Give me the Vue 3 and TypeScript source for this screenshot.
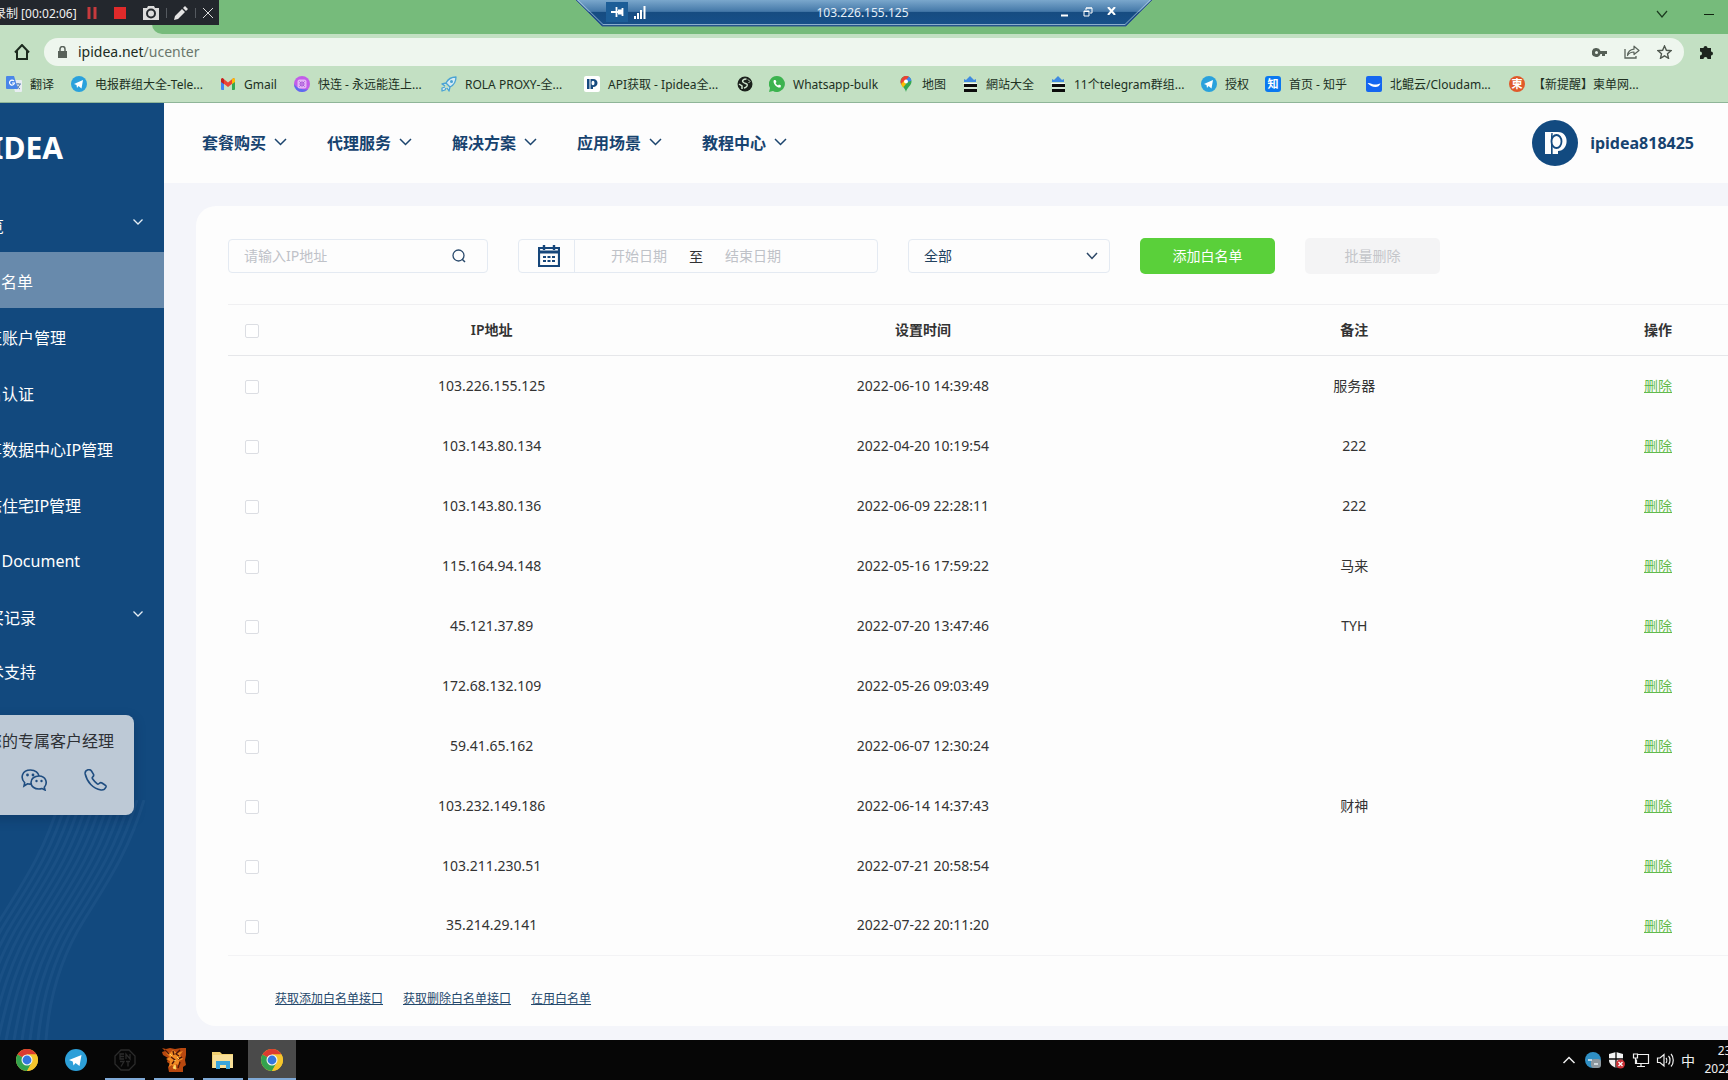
<script setup lang="ts">
import { computed, ref } from 'vue'

interface Bookmark {
  icon: string
  label: string
  width: number
}

interface WhitelistRow {
  ip: string
  time: string
  note: string
}

const bookmarks: Bookmark[] = [
  { icon: 'translate', label: '翻译', width: 25 },
  { icon: 'telegram', label: '电报群组大全-Tele...', width: 109 },
  { icon: 'gmail', label: 'Gmail', width: 34 },
  { icon: 'kuailian', label: '快连 - 永远能连上...', width: 107 },
  { icon: 'rocket', label: 'ROLA PROXY-全...', width: 103 },
  { icon: 'ipidea', label: 'API获取 - Ipidea全...', width: 113 },
  { icon: 'globe', label: '', width: 0 },
  { icon: 'whatsapp', label: 'Whatsapp-bulk', width: 89 },
  { icon: 'maps', label: '地图', width: 24 },
  { icon: 'stack', label: '網站大全', width: 48 },
  { icon: 'stack', label: '11个telegram群组...', width: 111 },
  { icon: 'telegram', label: '授权', width: 24 },
  { icon: 'zhihu', label: '首页 - 知乎', width: 61 },
  { icon: 'cloudam', label: '北鲲云/Cloudam...', width: 103 },
  { icon: 'jian', label: '【新提醒】柬单网...', width: 102 },
]

const navItems = ['套餐购买', '代理服务', '解决方案', '应用场景', '教程中心']

const sideItems = [
  { label: '总览', arrow: true, top: true, active: false },
  { label: 'IP白名单', arrow: false, top: false, active: true },
  { label: '认证账户管理', arrow: false, top: false, active: false },
  { label: '实名认证', arrow: false, top: false, active: false },
  { label: '独享数据中心IP管理', arrow: false, top: false, active: false },
  { label: '静态住宅IP管理', arrow: false, top: false, active: false },
  { label: 'API Document', arrow: false, top: true, active: false },
  { label: '购买记录', arrow: true, top: true, active: false },
  { label: '技术支持', arrow: false, top: true, active: false },
]

const rows: WhitelistRow[] = [
  { ip: '103.226.155.125', time: '2022-06-10 14:39:48', note: '服务器' },
  { ip: '103.143.80.134', time: '2022-04-20 10:19:54', note: '222' },
  { ip: '103.143.80.136', time: '2022-06-09 22:28:11', note: '222' },
  { ip: '115.164.94.148', time: '2022-05-16 17:59:22', note: '马来' },
  { ip: '45.121.37.89', time: '2022-07-20 13:47:46', note: 'TYH' },
  { ip: '172.68.132.109', time: '2022-05-26 09:03:49', note: '' },
  { ip: '59.41.65.162', time: '2022-06-07 12:30:24', note: '' },
  { ip: '103.232.149.186', time: '2022-06-14 14:37:43', note: '财神' },
  { ip: '103.211.230.51', time: '2022-07-21 20:58:54', note: '' },
  { ip: '35.214.29.141', time: '2022-07-22 20:11:20', note: '' },
]

const selected = ref<string[]>([])
const allSelected = computed({
  get: () => selected.value.length === rows.length,
  set: (on: boolean) => {
    selected.value = on ? rows.map((r) => r.ip) : []
  },
})

// Contour lines in the sidebar's lower background
const waves = Array.from(
  { length: 13 },
  (_, i) =>
    `M${-50 + 8 * i} 240 C${-35 + 7 * i} 200 ${-25 + 7 * i} 160 ${7 * i} 120 S${45 + 7 * i} 50 ${60 + 7 * i} 0`,
)

const tasks = ['chrome', 'telegram', 'emblem', 'flame', 'folder', 'chrome']
</script>

<template>
  <div class="desktop">
    <header class="browser">
      <div class="tabstrip">
        <div class="tab-end"></div>
        <div class="win-controls">
          <button type="button" aria-label="搜索标签页">
            <svg width="12" height="8" viewBox="0 0 12 8"><path d="M1 1l5 6 5-6" fill="none" stroke="#1c3a20" stroke-width="1.2" /></svg>
          </button>
          <button type="button" aria-label="最小化">
            <svg width="10" height="8" viewBox="0 0 10 8"><path d="M0 4.500h10" stroke="#10240f" /></svg>
          </button>
        </div>
      </div>

      <div class="recorder">
        <span class="rec-text">录制 [00:02:06]</span>
        <svg class="rec-main" width="10" height="12" viewBox="0 0 10 12"><path d="M2 0v12M8 0v12" stroke="#c63a3d" stroke-width="3" /></svg>
        <svg class="rec-main" width="12" height="12" viewBox="0 0 12 12"><path d="M0 0h12v12H0z" fill="#e02a2a" /></svg>
        <svg width="16" height="14" viewBox="0 0 16 14">
          <path d="M5 0h6l1 2h4v12H0V2h4z" fill="#dcdcdc" />
          <circle cx="8" cy="7.500" r="4" fill="none" stroke="#25292e" stroke-width="2" />
        </svg>
        <i class="rec-sep"></i>
        <svg width="14" height="14" viewBox="0 0 14 14"><path d="M0 14l1-4 7-7 3 3-7 7zM9 2l2-2 3 3-2 2z" fill="#e4e4e4" /></svg>
        <i class="rec-sep"></i>
        <svg width="10" height="10" viewBox="0 0 10 10"><path d="M0 0l10 10M10 0L0 10" stroke="#dcdcdc" /></svg>
      </div>

      <div class="rdp">
        <svg class="rdp-shape" viewBox="0 0 576 27" preserveAspectRatio="none">
          <defs>
            <linearGradient id="rdpfill" x1="0" y1="0" x2="0" y2="1">
              <stop offset="0" stop-color="#7aa7cc" />
              <stop offset=".44" stop-color="#4478a8" />
              <stop offset=".46" stop-color="#164c81" />
              <stop offset="1" stop-color="#17508a" />
            </linearGradient>
          </defs>
          <path d="M0 0L26 26H550L576 0z" fill="url(#rdpfill)" />
          <path d="M0 0L26 26H550L576 0" fill="none" stroke="#37598c" />
          <path d="M2 0L27 24.500H549L574 0" fill="none" stroke="#a9c6dd" stroke-width=".8" />
        </svg>
        <div class="rdp-row">
          <span class="rdp-pin">
            <svg width="13" height="10" viewBox="0 0 13 10"><path d="M0 5h5M5.500 0v10M6 5h5M7 3.500h4M7 6.500h4M11.500 1v8" stroke="#fff" stroke-width="1.800" fill="none" /></svg>
          </span>
          <svg width="12" height="13" viewBox="0 0 12 13"><path d="M1 10v3M4 7v6M7 4v9M10.500 0v13" stroke="#fff" stroke-width="2" /></svg>
          <span class="rdp-title">103.226.155.125</span>
          <span class="rdp-btns">
            <svg width="8" height="10" viewBox="0 0 8 10"><path d="M0 8.500h7" stroke="#fff" stroke-width="2" /></svg>
            <svg width="10" height="10" viewBox="0 0 10 10"><path d="M3 3V1h6v5H7M1 4h5v5H1zM3 1h6M1 4.500h5" fill="none" stroke="#fff" /></svg>
            <svg width="9" height="8" viewBox="0 0 9 8"><path d="M1 0l7 8M8 0L1 8" stroke="#fff" stroke-width="2" /></svg>
          </span>
        </div>
      </div>

      <div class="toolbar">
        <button type="button" class="home" aria-label="主页">
          <svg width="16" height="16" viewBox="0 0 16 16"><path d="M1 8.500L8 1l7 7.500M3 7v8h10V7" fill="none" stroke="#1c2a1e" stroke-width="2" /></svg>
        </button>
        <label class="omnibox">
          <svg width="9" height="12" viewBox="0 0 9 12"><path d="M0 5h9v7H0z" fill="#59625a" /><path d="M2 5V3a2.500 2.500 0 015 0v2" fill="none" stroke="#59625a" stroke-width="1.500" /></svg>
          <span class="url">ipidea.net<span class="path">/ucenter</span></span>
          <svg class="end" width="15" height="9" viewBox="0 0 15 9"><path d="M4.500 0a4.500 4.500 0 104 6H10v2h3V6h2V3H8.500a4.500 4.500 0 00-4-3zm0 3a1.500 1.500 0 110 3 1.500 1.500 0 010-3z" fill="#555f56" /></svg>
          <svg width="16" height="14" viewBox="0 0 16 14"><path d="M1 4v9h11v-2" fill="none" stroke="#5a635b" stroke-width="1.300" /><path d="M3.500 10.500C4 6 6.500 4.500 10 4.200V1.200L15 5.500l-5 4V7C7 7 5 8 3.500 10.500z" fill="none" stroke="#5a635b" stroke-width="1.200" stroke-linejoin="round" /></svg>
          <svg width="15" height="14" viewBox="0 0 15 14"><path d="M7.500 1l1.900 4.300 4.600.4-3.500 3.100 1 4.500-4-2.400-4 2.400 1-4.500L1 5.700l4.600-.4z" fill="none" stroke="#4f584f" stroke-width="1.400" /></svg>
        </label>
        <svg class="puzzle" width="16" height="16" viewBox="0 0 16 16"><path d="M2 4h3.500a2 2 0 114 0H13v3.500a2 2 0 110 4V15H9.500a2 2 0 10-4 0H2v-3.500a2 2 0 100-4z" fill="#1d241e" /></svg>
      </div>

      <nav class="bookmarks">
        <a v-for="(b, i) in bookmarks" :key="i" href="#" :aria-label="b.label || '网页'">
          <svg width="16" height="16" viewBox="0 0 16 16">
            <g v-if="b.icon === 'translate'">
              <path d="M6 4h9a1 1 0 011 1v10a1 1 0 01-1 1H9z" fill="#e8edf2" />
              <path d="M9 8h6M12 7v1M14 8c-1 3-3 4-4 5M10.500 9c1 2 2 3 3.500 4" stroke="#5a7fae" fill="none" />
              <path d="M1 0h7l4 13H1a1 1 0 01-1-1V1a1 1 0 011-1z" fill="#4a86e8" />
              <path d="M8 5A2.500 2.500 0 108.500 7H6" fill="none" stroke="#fff" stroke-width="1.200" />
            </g>
            <g v-else-if="b.icon === 'telegram'">
              <circle cx="8" cy="8" r="8" fill="#2aa1dc" />
              <path d="M3 8l9-4-1.500 8.500L7.500 10l-1.500 2-.5-3z" fill="#fff" />
            </g>
            <g v-else-if="b.icon === 'gmail'">
              <path d="M1 3h3v11H2a1 1 0 01-1-1z" fill="#4285f4" />
              <path d="M12 3h3v10a1 1 0 01-1 1h-2z" fill="#34a853" />
              <path d="M1 3l1.500-1L8 6.500 13.500 2 15 3v2.500L8 11 1 5.500z" fill="#ea4335" />
              <path d="M12 3.300L13.500 2 15 3v3l-3 2z" fill="#fbbc04" />
              <path d="M1 3l1.500-1L4 3.300V8L1 6z" fill="#c5221f" />
            </g>
            <g v-else-if="b.icon === 'kuailian'">
              <circle cx="8" cy="8" r="8" fill="#c25de8" />
              <path d="M0 8a8 8 0 008 8 8 8 0 006-2.500C8 14 3 12 0 8z" fill="#5a6df0" />
              <rect x="3.500" y="3.500" width="9" height="9" rx="2" fill="#e3b4f5" />
              <circle cx="8" cy="8" r="2" fill="none" stroke="#a44fd6" />
              <path d="M5 5l6 6M11 5l-6 6" stroke="#a44fd6" stroke-width=".6" />
            </g>
            <g v-else-if="b.icon === 'rocket'">
              <path d="M15 1c-5 0-8 2-10 6l4 4c4-2 6-5 6-10zM5 7L1 8l3 2M9 11l-1 4-2-3M4 11l-3 1v3l3-1 1-2" fill="#d5eaf3" stroke="#4aa3d4" stroke-width="1.300" stroke-linejoin="round" />
              <circle cx="10.500" cy="5.500" r="1.500" fill="#4aa3d4" />
            </g>
            <g v-else-if="b.icon === 'ipidea'">
              <rect width="16" height="16" rx="2" fill="#fff" />
              <path d="M3 3h2.500v10H3zM6.500 3H9c6 0 6 8 0 8v2H6.500z" fill="#164a80" />
              <ellipse cx="9" cy="7" rx="1.500" ry="2.200" fill="#fff" />
            </g>
            <g v-else-if="b.icon === 'globe'">
              <circle cx="8" cy="8" r="7.500" fill="#1b211c" />
              <path d="M9.500 3C6 3 4.500 5 6.500 6.500s4.500.5 3.500 3.500c-.7 1.700-2 1.500-3 2M2 8l3 2v3" fill="none" stroke="#cfe3ce" stroke-width="1.500" />
              <path d="M11 3.500l2 2-1.500 1.500" fill="none" stroke="#cfe3ce" />
            </g>
            <g v-else-if="b.icon === 'whatsapp'">
              <path d="M8 0a8 8 0 11-4 15l-4 1 1-4A8 8 0 018 0z" fill="#3cb34f" />
              <path d="M5 4c-2 3 3 8.500 6.500 7.500l.5-2-2-1-1 1c-1-.3-2-1.500-2.500-2.500l1-1L6.500 4z" fill="#fff" />
            </g>
            <g v-else-if="b.icon === 'maps'">
              <path d="M8 0a5.500 5.500 0 015.500 5.500C13.500 10 9 11 8 16 7 11 2.500 10 2.500 5.500A5.500 5.500 0 018 0z" fill="#34a853" />
              <path d="M4 2a5.500 5.500 0 017-1.200L7 6 3 8a6 6 0 011-6z" fill="#ea4335" />
              <path d="M11 .8a5.500 5.500 0 012.400 4L9.500 6 8 4z" fill="#4285f4" />
              <path d="M3 8l3-3 2 3-3 3.500z" fill="#fbbc04" />
              <circle cx="8" cy="5.500" r="2" fill="#fff" />
            </g>
            <g v-else-if="b.icon === 'stack'">
              <path d="M2 6V3l2 1 2-2 2-2 2 2 2 2 2-1v3z" fill="#3f8ae0" />
              <path d="M1 7.500h14" stroke="#f4f8f4" stroke-width="1" />
              <path d="M2 9.500h13M2 14.500h13" stroke="#0c0c0c" stroke-width="3" />
              <path d="M2 12h13" stroke="#e8f0e8" />
            </g>
            <g v-else-if="b.icon === 'zhihu'">
              <rect width="16" height="16" rx="3" fill="#0a78f0" />
              <text x="8" y="12" text-anchor="middle" class="glyph">知</text>
            </g>
            <g v-else-if="b.icon === 'cloudam'">
              <rect width="16" height="16" rx="2" fill="#1466f0" />
              <path d="M1.500 7c3-.3 4.500 1.300 6.500 1.500 2.500.2 4.500-.5 6.500-1-1 2.500-2.500 3.500-5 3.500-3.500 0-5.500-1.500-8-4z" fill="#fff" />
            </g>
            <g v-else>
              <circle cx="8" cy="8" r="8" fill="#e0592a" />
              <text x="8" y="12" text-anchor="middle" class="glyph">柬</text>
            </g>
          </svg>
          <span v-if="b.label" :style="{ width: b.width + 'px' }">{{ b.label }}</span>
        </a>
      </nav>
    </header>

    <div class="site">
      <aside class="sidebar">
        <svg class="waves" width="164" height="240" viewBox="0 0 164 240">
          <path v-for="(d, i) in waves" :key="i" :d="d" />
        </svg>
        <div class="logo">IPIDEA</div>
        <a v-for="item in sideItems" :key="item.label" href="#" class="side-item" :class="{ active: item.active, top: item.top }">
          <span>{{ item.label }}</span>
          <svg v-if="item.arrow" width="10" height="6" viewBox="0 0 10 6"><path d="M.5.5L5 5 9.500.5" fill="none" stroke="#e6eef5" stroke-width="1.300" /></svg>
        </a>
        <div class="manager">
          <p>联系您的专属客户经理</p>
          <div class="manager-icons">
            <svg width="26" height="22" viewBox="0 0 26 22"><circle cx="13" cy="11" r="9" /></svg>
            <svg width="26" height="22" viewBox="0 0 26 22">
              <path d="M10.500 15c-1.500.3-2.500.2-4-.2L3 17l.7-3.300C-1 9 1 1 9.500 1c5 0 8 3 8.500 6" />
              <path d="M18 7c-4.500 0-8 2.500-8 6.500S13.500 20 18 20c1 0 2-.2 3-.5l3 1.500-.7-2.700C27 14 25 7 18 7z" />
              <g class="dots"><circle cx="6.500" cy="6" r="1.400" /><circle cx="12" cy="6" r="1.400" /><circle cx="15.500" cy="12" r="1.200" /><circle cx="20.500" cy="12" r="1.200" /></g>
            </svg>
            <svg width="26" height="22" viewBox="0 0 26 22"><path d="M5 .8C3 1.500 1.800 3 2.200 5 4 13 10 19.500 18 21c2 .3 4-.8 5-3 .4-1-.2-1.500-1-2l-3-2c-1-.6-1.800-.4-2.500.3-1 1-1.500 1.200-2.500.4C12 13 11 12 9.500 9.800c-.6-1-.4-1.400.3-2C10.700 7 11 6.300 10.500 5.300L8.500 2C7.500.7 6.500.3 5 .8z" /></svg>
          </div>
        </div>
      </aside>

      <main class="main">
        <div class="topbar">
          <nav class="topnav">
            <a v-for="n in navItems" :key="n" href="#">
              {{ n }}
              <svg width="13" height="8" viewBox="0 0 13 8"><path d="M1 1l5.500 5.500L12 1" fill="none" stroke="#1c456e" stroke-width="1.500" /></svg>
            </a>
          </nav>
          <div class="user">
            <svg width="46" height="46" viewBox="0 0 46 46">
              <circle cx="23" cy="23" r="23" fill="#124a80" />
              <path d="M13 12h6v22h-6z" fill="#fdfdfd" />
              <path d="M18.500 12H26c12 0 11 19 0 19v3h-6V16" fill="#fdfdfd" />
              <path d="M20 34V13" stroke="#124a80" stroke-width="1.300" />
              <ellipse cx="24.500" cy="21.500" rx="5" ry="6.500" fill="#fdfdfd" stroke="#124a80" stroke-width="1.800" />
            </svg>
            <span>ipidea818425</span>
          </div>
        </div>

        <section class="panel">
          <form class="filters" @submit.prevent>
            <label class="search">
              <input type="text" placeholder="请输入IP地址" aria-label="IP地址" />
              <svg width="14" height="14" viewBox="0 0 14 14"><circle cx="6.500" cy="6.500" r="5.500" fill="none" stroke="#2a4a6c" stroke-width="1.300" /><path d="M10 10l3 3" stroke="#2a4a6c" stroke-width="1.500" /></svg>
            </label>
            <div class="range">
              <span class="cal">
                <svg width="22" height="22" viewBox="0 0 22 22">
                  <path d="M1 3h20v18H1z" fill="none" stroke="#16467a" stroke-width="2.200" />
                  <path d="M1 7h20" stroke="#16467a" stroke-width="3" />
                  <path d="M6 0v5M16 0v5" stroke="#16467a" stroke-width="2.400" />
                  <path d="M5 12h3M9.500 12h3M14 12h3M5 16h3M9.500 16h3M14 16h3" stroke="#16467a" stroke-width="2" />
                </svg>
              </span>
              <input type="text" placeholder="开始日期" aria-label="开始日期" />
              <span class="to">至</span>
              <input type="text" placeholder="结束日期" aria-label="结束日期" />
            </div>
            <div class="select">
              <select aria-label="类型"><option>全部</option></select>
              <svg width="12" height="8" viewBox="0 0 12 8"><path d="M1 1l5 5.500L11 1" fill="none" stroke="#2c4766" stroke-width="1.500" /></svg>
            </div>
            <button type="submit" class="btn primary">添加白名单</button>
            <button type="button" class="btn" disabled>批量删除</button>
          </form>

          <table>
            <colgroup>
              <col class="c-check" /><col /><col /><col /><col class="c-op" />
            </colgroup>
            <thead>
              <tr>
                <th><input v-model="allSelected" type="checkbox" aria-label="全选" /></th>
                <th>IP地址</th>
                <th>设置时间</th>
                <th>备注</th>
                <th>操作</th>
              </tr>
            </thead>
            <tbody>
              <tr v-for="r in rows" :key="r.ip">
                <td><input v-model="selected" type="checkbox" :value="r.ip" :aria-label="r.ip" /></td>
                <td>{{ r.ip }}</td>
                <td>{{ r.time }}</td>
                <td>{{ r.note }}</td>
                <td><a href="#">删除</a></td>
              </tr>
            </tbody>
          </table>

          <div class="links">
            <a href="#">获取添加白名单接口</a>
            <a href="#">获取删除白名单接口</a>
            <a href="#">在用白名单</a>
          </div>
        </section>
      </main>
    </div>

    <footer class="taskbar">
      <div class="tasks">
        <button v-for="(t, i) in tasks" :key="i" type="button" :aria-label="t" :class="{ open: i > 1, current: i === 5 }">
          <svg v-if="t === 'chrome'" width="22" height="22" viewBox="0 0 22 22">
            <circle cx="11" cy="11" r="11" fill="#f5c52c" />
            <path d="M11 11L1.500 5.500A11 11 0 0120.500 5.500H11z" fill="#dc3b30" />
            <path d="M1.500 5.500A11 11 0 0011 22l4.700-8.500L11 11z" fill="#33a24e" />
            <path d="M11 5.500h9.500A11 11 0 0111 22l5-8.500z" fill="#f5c52c" />
            <circle cx="11" cy="11" r="5.500" fill="#f4f4f4" />
            <circle cx="11" cy="11" r="4.400" fill="#3577dd" />
          </svg>
          <svg v-else-if="t === 'telegram'" width="22" height="22" viewBox="0 0 22 22">
            <circle cx="11" cy="11" r="11" fill="#2c9fd8" />
            <path d="M4 11l12.500-5-2 11-4-3-2 2.500-.8-4z" fill="#fff" />
          </svg>
          <svg v-else-if="t === 'emblem'" width="22" height="22" viewBox="0 0 22 22">
            <g fill="none" stroke="#2b2b2b" stroke-width="1.300">
              <path d="M7 1h8l6 6v8l-6 6H7l-6-6V7z" />
              <path d="M10 5H6v5h4M6 7.500h4M12 10V5l4 5V5M6 12.500h4l-3 5M12 12.500h4M14 12.500v5" />
            </g>
          </svg>
          <svg v-else-if="t === 'flame'" width="24" height="24" viewBox="0 0 24 24">
            <path d="M0 0l4 1 4-1 5 1 6-1h5v7l-1 5 1 5-3 2v5H7l-1-5 2-3-3-2 1-4-5-3-1-3 3-1z" fill="#b8480f" />
            <path d="M3 3l5 2 3-3 4 3 6-2-3 4 3 4-4 2 1 5-4-2-1 5-3-4-3 2 1-6-4-2 4-2-3-3z" fill="#f08a24" />
            <path d="M3 2l4 4M18 2l-4 4 3 2M9 9l4 3-3 4M18 14l-2 6M11 3l1 4M20 9l-4 2" fill="none" stroke="#4c1608" stroke-width="1.400" />
            <path d="M11 20l2-3 1 4zM8 6l2 2M15 9l2 2M12 13l2-1" fill="#ffe27a" stroke="#ffd45c" />
          </svg>
          <svg v-else width="22" height="18" viewBox="0 0 22 18">
            <path d="M0 1h8l2 2h11v14H0z" fill="#f0cf70" />
            <path d="M1 4h20v13H1z" fill="#f8df98" />
            <path d="M4 10h14v8h-4v-4H8v4H4z" fill="#3aa5dc" />
          </svg>
        </button>
      </div>
      <div class="tray">
        <svg width="24" height="20" viewBox="0 0 24 20"><path d="M6.500 13L12 7.500l5.500 5.500" fill="none" stroke="#eee" stroke-width="1.500" /></svg>
        <svg width="24" height="20" viewBox="0 0 24 20"><circle cx="12" cy="10" r="8" fill="#2f8fc4" /><rect x="10" y="9" width="10" height="9" rx="3" fill="#8d979e" /><path d="M7 10h4M13 14h4" stroke="#e6eef2" stroke-width="1.500" /></svg>
        <svg width="24" height="20" viewBox="0 0 24 20"><path d="M4 4l7-2 7 2v6c0 4-3 6-7 8-4-2-7-4-7-8z" fill="#f2f2f2" /><path d="M11 2v16M4 9h14" stroke="#0a0a0a" stroke-width="1.300" /><circle cx="15.500" cy="14" r="4.500" fill="#cc3238" /><path d="M13.500 12l4 4M17.500 12l-4 4" stroke="#fff" stroke-width="1.300" /></svg>
        <svg width="24" height="20" viewBox="0 0 24 20"><path d="M8 4.500h11.500v9H7.500v-4M8 16.500h8M12 14v2.500M4.500 4v4h4V4zM6.500 8v6" fill="none" stroke="#f0f0f0" stroke-width="1.200" /></svg>
        <svg width="24" height="20" viewBox="0 0 24 20"><path d="M4.500 8v4.500h2.500l4 3.500V4.500L7 8zM13 8c1 1 1 3.500 0 5M15.500 6c2 2 2 6.500 0 8.500M18 4c3 3 3 9.500 0 12.500" fill="none" stroke="#f0f0f0" stroke-width="1.200" /></svg>
        <span class="ime">中</span>
        <span class="clock"><span>23:14</span><span>2022/7/22</span></span>
      </div>
    </footer>
  </div>
</template>

<style>
body {
  margin: 0;
}
</style>

<style scoped>
.desktop {
  display: flex;
  flex-direction: column;
  min-height: 100vh;
  overflow: hidden;
  font-family: 'Noto Sans', 'Noto Sans CJK SC', sans-serif;
  font-size: 14px;
  color: #333;
  background: #f4f5fa;
}
* {
  box-sizing: border-box;
}
svg {
  flex: none;
  display: block;
}
button {
  padding: 0;
  border: 0;
  background: none;
  font: inherit;
}
a {
  color: inherit;
  text-decoration: none;
}

/* Browser chrome */
.browser {
  position: relative;
  background: #c3e0c3;
  border-bottom: 1px solid #8fb598;
}
.tabstrip {
  display: flex;
  height: 34px;
  padding-left: 152px;
}
.tab-end {
  flex: 1;
  background: #76bb7b;
  border-bottom-left-radius: 10px;
}
.win-controls {
  display: flex;
  align-items: center;
  gap: 36px;
  padding: 0 14px 6px 0;
  background: #76bb7b;
}
.recorder {
  position: absolute;
  top: 0;
  left: -18px;
  display: flex;
  align-items: center;
  gap: 9px;
  height: 25px;
  width: 237px;
  padding-left: 12px;
  background: #23272d;
  color: #f0f0f0;
  font-size: 12px;
}
.rec-text {
  width: 84px;
  white-space: nowrap;
}
.rec-main {
  margin-right: 8px;
}
.rec-sep {
  width: 1px;
  height: 10px;
  background: #555a60;
  margin: 0 -2px;
}
.rdp {
  position: absolute;
  top: 0;
  left: 50%;
  width: 576px;
  height: 27px;
  margin-left: -288px;
}
.rdp-shape {
  position: absolute;
  width: 100%;
  height: 100%;
}
.rdp-row {
  position: relative;
  display: flex;
  align-items: center;
  gap: 6px;
  height: 24px;
  padding: 0 36px 0 30px;
  color: #e4eef7;
  font-size: 12px;
}
.rdp-pin {
  display: flex;
  align-items: center;
  justify-content: center;
  width: 22px;
  height: 20px;
  background: #1c5d97;
}
.rdp-title {
  flex: 1;
  text-align: center;
  padding-left: 18px;
}
.rdp-btns {
  display: flex;
  gap: 14px;
}
.toolbar {
  display: flex;
  align-items: center;
  gap: 14px;
  padding: 4px 14px;
}
.omnibox {
  flex: 1;
  display: flex;
  align-items: center;
  height: 28px;
  padding: 0 12px 0 14px;
  border-radius: 14px;
  background: #eef6ee;
  color: #202b22;
}
.url {
  margin-left: 11px;
  padding-bottom: 2px;
  font-size: 14px;
}
.path {
  color: #6a776c;
}
.omnibox .end {
  margin-left: auto;
}
.omnibox .end ~ svg {
  margin-left: 17px;
}
.bookmarks {
  display: flex;
  gap: 16px;
  height: 32px;
  padding: 0 6px 4px;
  align-items: center;
  color: #20301f;
  font-size: 12px;
  white-space: nowrap;
}
.bookmarks a {
  display: flex;
  align-items: center;
  gap: 8px;
}
.glyph {
  fill: #fff;
  font-size: 11px;
  font-weight: 700;
}

/* Site */
.site {
  flex: 1;
  display: flex;
  margin: 0 -82px 0 -96px;
}
.sidebar {
  position: relative;
  width: 260px;
  flex: none;
  background: #12497e;
  color: #fff;
  font-size: 16px;
}
.waves {
  position: absolute;
  right: 0;
  bottom: 0;
  fill: none;
  stroke: #2a5f92;
  stroke-width: 3;
  opacity: 0.35;
}
.logo {
  height: 93px;
  padding: 24px 101px 0 0;
  text-align: right;
  font-size: 30px;
  line-height: 42px;
  font-weight: 700;
}
.side-item {
  display: flex;
  align-items: center;
  justify-content: space-between;
  height: 56px;
  padding: 2px 21px 0 66px;
}
.side-item.top {
  padding-left: 68px;
}
.side-item:last-of-type {
  height: 52px;
}
.side-item svg {
  margin-bottom: 6px;
}
.side-item.active {
  background: #688aac;
}
.manager {
  position: relative;
  margin: 19px 30px 0;
  height: 100px;
  border-radius: 8px;
  background: #bdc9d6;
  box-shadow: 0 4px 12px rgba(0, 20, 50, 0.25);
  color: #2d3035;
}
.manager p {
  margin: 0;
  padding-top: 14px;
  line-height: 24px;
  text-align: center;
}
.manager-icons {
  display: flex;
  justify-content: center;
  gap: 36px;
  padding-top: 16px;
  fill: none;
  stroke: #1f4d80;
  stroke-width: 1.6;
}
.dots {
  fill: #1f4d80;
  stroke: none;
}
.main {
  flex: 1;
}
.topbar {
  display: flex;
  align-items: center;
  justify-content: space-between;
  height: 80px;
  padding: 0 116px 0 38px;
  background: #fdfdfd;
  color: #17436f;
  font-size: 16px;
  font-weight: 600;
}
.topnav {
  display: flex;
  gap: 40px;
  padding-bottom: 2px;
}
.topnav a {
  display: flex;
  align-items: center;
  gap: 8px;
}
.user {
  display: flex;
  align-items: center;
  gap: 12px;
  font-weight: 700;
}
.panel {
  margin: 23px 32px 14px;
  padding: 32px 32px 18px;
  border-radius: 20px;
  background: #fdfdfd;
}
.filters {
  display: flex;
  align-items: center;
  gap: 30px;
  height: 36px;
}
.search,
.range,
.select {
  display: flex;
  align-items: center;
  height: 34px;
  border: 1px solid #e4eaf2;
  border-radius: 4px;
}
.search {
  width: 260px;
  padding: 0 21px 0 15px;
}
.filters input {
  min-width: 0;
  padding: 0 0 2px;
  border: 0;
  outline: 0;
  background: none;
  font: inherit;
}
.filters input::placeholder {
  color: #bfc2c8;
}
.search input {
  flex: 1;
}
.range {
  width: 360px;
}
.range input {
  width: 100px;
  text-align: center;
}
.cal {
  display: flex;
  align-items: center;
  justify-content: center;
  width: 56px;
  height: 32px;
  margin-right: 14px;
  padding-left: 4px;
  border-right: 1px solid #e4eaf2;
}
.to {
  width: 14px;
  color: #303133;
}
.select {
  position: relative;
  width: 202px;
}
.select select {
  width: 100%;
  height: 32px;
  padding: 0 15px 2px;
  border: 0;
  appearance: none;
  background: none;
  color: #22415f;
  font: inherit;
}
.select svg {
  position: absolute;
  right: 11px;
  pointer-events: none;
}
.btn {
  width: 135px;
  height: 36px;
  padding-bottom: 2px;
  border-radius: 5px;
  background: #f4f4f5;
  color: #c4c6ca;
}
.btn.primary {
  background: #5ad03a;
  color: #fff;
}
table {
  width: 100%;
  margin-top: 30px;
  border-collapse: separate;
  border-spacing: 0;
  table-layout: fixed;
  text-align: center;
}
.c-check {
  width: 48px;
}
.c-op {
  width: 176px;
}
th {
  height: 52px;
  padding: 0 0 2px;
  border-top: 1px solid #f0f0f2;
  border-bottom: 1px solid #e6e7ea;
  font-weight: 600;
}
td {
  height: 60px;
  padding: 0 0 2px;
}
tbody tr:last-child td {
  border-bottom: 1px solid #f3f3f5;
}
td a {
  color: #62bb4c;
  text-decoration: underline;
}
input[type='checkbox'] {
  display: block;
  width: 14px;
  height: 14px;
  margin: 4px auto 0;
  appearance: none;
  border: 1px solid #dcdee3;
  border-radius: 2px;
  background: #fff;
}
input[type='checkbox']:checked {
  background: #12497e;
}
.links {
  display: flex;
  gap: 20px;
  margin-top: 34px;
  padding-left: 47px;
  color: #24486c;
  font-size: 12px;
  line-height: 18px;
}
.links a {
  text-decoration: underline;
}

/* Taskbar */
.taskbar {
  position: relative;
  display: flex;
  justify-content: space-between;
  height: 40px;
  background: #060606;
}
.tasks {
  display: flex;
  gap: 1px;
  padding-left: 3px;
}
.tasks button {
  position: relative;
  display: flex;
  align-items: center;
  justify-content: center;
  width: 48px;
}
.tasks .open::after {
  content: '';
  position: absolute;
  left: 4px;
  right: 4px;
  bottom: 0;
  height: 2px;
  background: #7fa9d6;
}
.tasks .current {
  background: #4a4a4a;
}
.tasks .current::after {
  left: 0;
  right: 0;
}
.tray {
  display: flex;
  align-items: center;
  margin-right: -39px;
  color: #f0f0f0;
}
.ime {
  width: 22px;
  text-align: center;
}
.clock {
  display: flex;
  flex-direction: column;
  width: 68px;
  font-size: 12px;
  line-height: 18px;
  text-align: center;
}
</style>
